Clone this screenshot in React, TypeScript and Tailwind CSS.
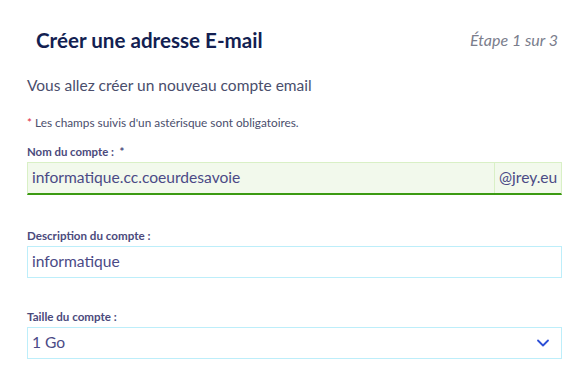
import { ChevronDown } from "lucide-react";

const font = { fontFamily: '"Source Sans Pro", Lato, "Liberation Sans", sans-serif' };

export default function App() {
  return (
    <div className="w-[580px] h-[368px] bg-white pl-[27px] pr-[18px] overflow-hidden" style={font}>
      {/* En-tête */}
      <header className="mt-[26px] h-[28px] flex items-center justify-between">
        <h1 className="pl-[9px] text-[20.6px] font-bold text-[#131f52] leading-[28px]">Créer une adresse E-mail</h1>
        <span className="pr-[4px] text-[16px] italic text-[#7a7d8c] leading-[28px]">Étape 1 sur 3</span>
      </header>

      <p className="mt-[21px] text-[15.5px] leading-[20px] text-[#4a4e6c]">Vous allez créer un nouveau compte email</p>

      <p className="mt-[21px] text-[11.8px] leading-[14px] text-[#4a4e6c]">
        <span className="text-[#e0263a]">*</span> Les champs suivis d'un astérisque sont obligatoires.
      </p>

      {/* Nom du compte */}
      <label className="block mt-[15px] text-[11.4px] leading-[14px] font-bold text-[#4b4a7c]">
        Nom du compte :&nbsp; *
      </label>
      <div className="mt-[3px] h-[33px] flex bg-[#f2f9ec] border border-[#d9f0c6] border-b-2 border-b-[#3b9a12]">
        <div className="flex-1 px-[4px] flex items-center text-[15.6px] text-[#4b4a86]">informatique.cc.coeurdesavoie</div>
        <div className="w-[67px] border-l border-[#d9f0c6] px-[4px] flex items-center text-[15.6px] text-[#4b4a86]">@jrey.eu</div>
      </div>

      {/* Description */}
      <label className="block mt-[34px] text-[11.6px] leading-[14px] font-bold text-[#4b4a7c]">Description du compte :</label>
      <div className="mt-[3px] h-[32px] border border-[#bdeefa] px-[4px] flex items-center text-[15.6px] text-[#4b4a86]">
        informatique
      </div>

      {/* Taille */}
      <label className="block mt-[32px] text-[11.6px] leading-[14px] font-bold text-[#4b4a7c]">Taille du compte :</label>
      <div className="mt-[3px] h-[32px] border border-[#bdeefa] pl-[4px] pr-[8px] flex items-center justify-between text-[15.6px] text-[#4b4a86]">
        <span>1 Go</span>
        <ChevronDown size={20} strokeWidth={2.2} className="text-[#2d4fd6]" />
      </div>
    </div>
  );
}
